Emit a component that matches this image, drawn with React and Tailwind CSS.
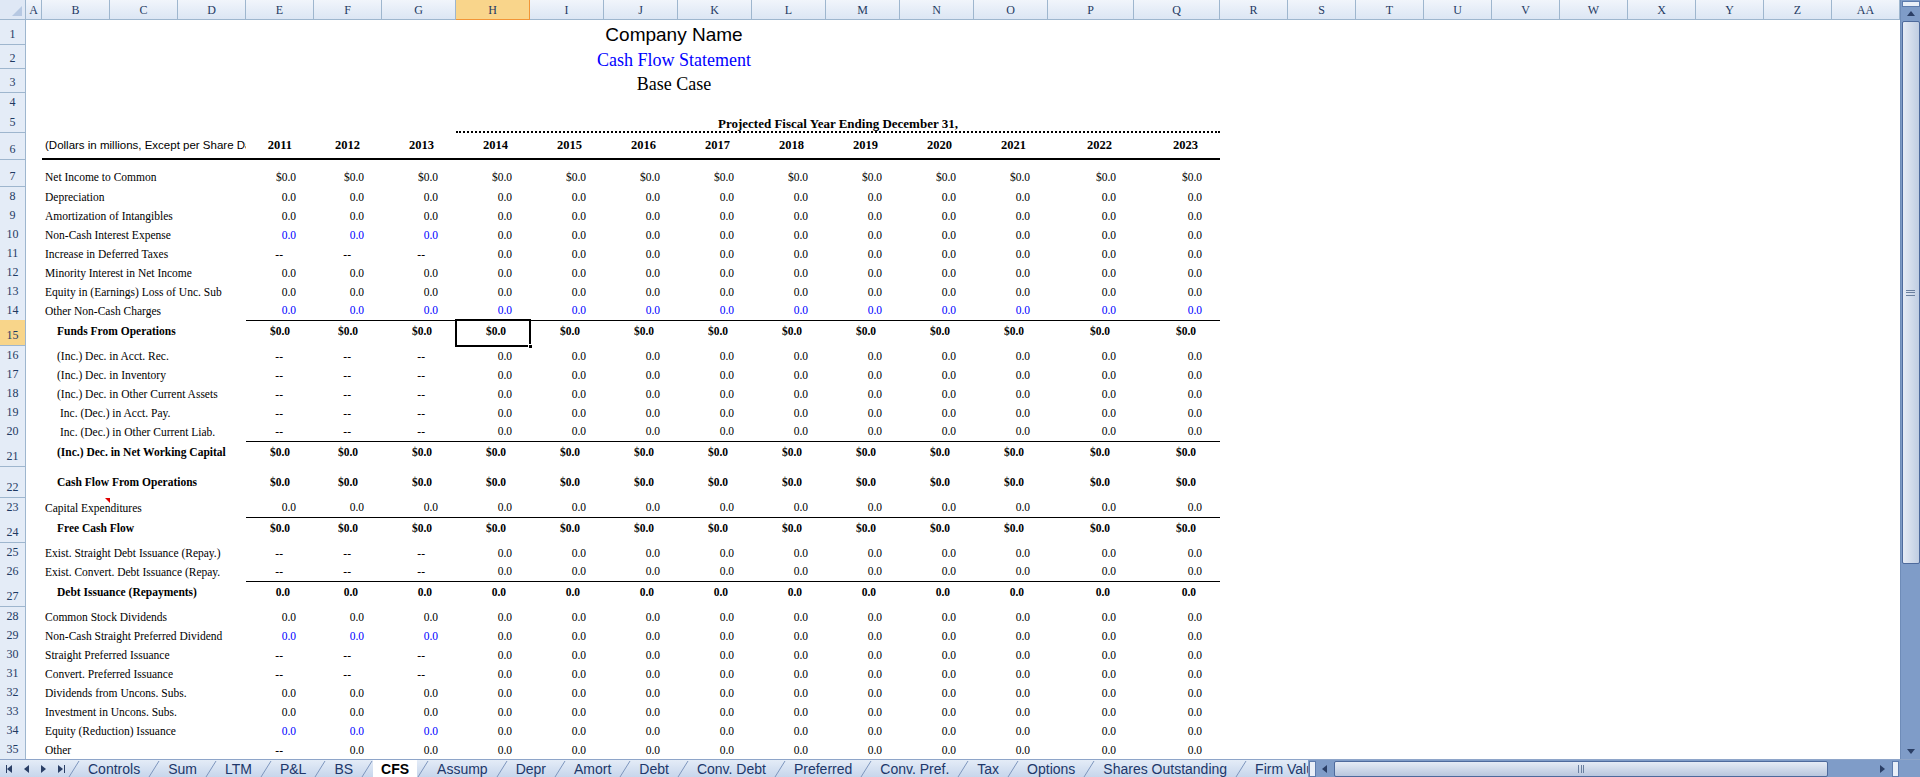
import React from "react";

const COLS = "grid-cols-[26px_16px_68px_68px_68px_68px_68px_74px_74px_74px_74px_74px_74px_74px_74px_74px_86px_86px_68px_68px_68px_68px_68px_68px_68px_68px_68px_68px]";
const LETTERS = ["A","B","C","D","E","F","G","H","I","J","K","L","M","N","O","P","Q","R","S","T","U","V","W","X","Y","Z","AA"];
const serif = { fontFamily: '"Liberation Serif", "Times New Roman", serif' };
const sans = { fontFamily: '"Liberation Sans", Arial, sans-serif' };

const Z = Array(13).fill("0.0");
const D = Array(13).fill("$0.0");
const dashE = ["--","--","--",...Array(10).fill("0.0")];

const rows = [
  { n: 7, h: 27, label: "Net Income to Common", vals: D },
  { n: 8, h: 19, label: "Depreciation", vals: Z },
  { n: 9, h: 19, label: "Amortization of Intangibles", vals: Z },
  { n: 10, h: 19, label: "Non-Cash Interest Expense", vals: Z, blue: [0,1,2] },
  { n: 11, h: 19, label: "Increase in Deferred Taxes", vals: dashE },
  { n: 12, h: 19, label: "Minority Interest in Net Income", vals: Z },
  { n: 13, h: 19, label: "Equity in (Earnings) Loss of Unc. Sub", vals: Z },
  { n: 14, h: 19, label: "Other Non-Cash Charges", vals: Z, blue: [0,1,2,3,4,5,6,7,8,9,10,11,12], line: true },
  { n: 15, h: 26, label: "Funds From Operations", vals: D, bold: true, indent: 12, top: true },
  { n: 16, h: 19, label: "(Inc.) Dec. in Acct. Rec.", vals: dashE, indent: 12 },
  { n: 17, h: 19, label: "(Inc.) Dec. in Inventory", vals: dashE, indent: 12 },
  { n: 18, h: 19, label: "(Inc.) Dec. in Other Current Assets", vals: dashE, indent: 12 },
  { n: 19, h: 19, label: "Inc. (Dec.) in Acct. Pay.", vals: dashE, indent: 15 },
  { n: 20, h: 19, label: "Inc. (Dec.) in Other Current Liab.", vals: dashE, indent: 15, line: true },
  { n: 21, h: 26, label: "(Inc.) Dec. in Net Working Capital", vals: D, bold: true, indent: 12, top: true },
  { n: 22, h: 31, label: "Cash Flow From Operations", vals: D, bold: true, indent: 12, mid: true },
  { n: 23, h: 19, label: "Capital Expenditures", vals: Z, line: true, comment: true },
  { n: 24, h: 26, label: "Free Cash Flow", vals: D, bold: true, indent: 12, top: true },
  { n: 25, h: 19, label: "Exist. Straight Debt Issuance (Repay.)", vals: dashE },
  { n: 26, h: 19, label: "Exist. Convert. Debt Issuance (Repay.", vals: dashE, line: true },
  { n: 27, h: 26, label: "Debt Issuance (Repayments)", vals: Z, bold: true, indent: 12, top: true },
  { n: 28, h: 19, label: "Common Stock Dividends", vals: Z },
  { n: 29, h: 19, label: "Non-Cash Straight Preferred Dividend", vals: Z, blue: [0,1,2] },
  { n: 30, h: 19, label: "Straight Preferred Issuance", vals: dashE },
  { n: 31, h: 19, label: "Convert. Preferred Issuance", vals: dashE },
  { n: 32, h: 19, label: "Dividends from Uncons. Subs.", vals: Z },
  { n: 33, h: 19, label: "Investment in Uncons. Subs.", vals: Z },
  { n: 34, h: 19, label: "Equity (Reduction) Issuance", vals: Z, blue: [0,1,2] },
  { n: 35, h: 19, label: "Other", vals: ["--", ...Array(12).fill("0.0")] },
];

function RowNum({ n, sel }) {
  return (
    <div className={`flex items-end justify-center pb-[1px] border-r border-b border-[#9eb6ce] text-[12px] text-[#1f3a63] ${sel ? "bg-[#f8d58a]" : "bg-[#e4ecf7]"}`} style={serif}>
      {n}
    </div>
  );
}

function DataRow({ r }) {
  const align = r.top ? "items-start pt-[3px]" : r.mid ? "items-center" : "items-end pb-[1px]";
  return (
    <div className={`grid ${COLS} shrink-0`} style={{ height: r.h }}>
      <RowNum n={r.n} sel={r.n === 15} />
      <div />
      <div className={`col-span-3 relative flex ${align} text-[11.5px] text-black whitespace-nowrap overflow-hidden ${r.bold ? "font-bold" : ""}`} style={{ ...serif, paddingLeft: 3 + (r.indent || 0) }}>
        {r.label}
        {r.comment && <div className="absolute left-[63px] top-0 w-0 h-0 border-l-[5px] border-l-transparent border-t-[5px] border-t-[#e00000]" />}
      </div>
      {r.vals.map((v, i) => {
        const isDash = v === "--";
        const blue = r.blue && r.blue.includes(i);
        const pr = isDash ? "pr-[31px]" : r.bold ? "pr-[24px]" : "pr-[18px]";
        const sel = r.n === 15 && i === 3;
        return (
          <div key={i} className={`relative flex justify-end ${align} ${pr} text-[11.5px] ${r.bold ? "font-bold" : ""} ${blue ? "text-[#0000ff]" : "text-black"} ${r.line ? "border-b border-black" : ""}`} style={serif}>
            {v}
            {sel && (
              <>
                <div className="absolute -left-[1px] -top-[1px] -right-[1px] -bottom-[1px] border-[2px] border-black" />
                <div className="absolute -right-[3px] -bottom-[3px] w-[5px] h-[5px] bg-black border border-white" />
              </>
            )}
          </div>
        );
      })}
      {Array(10).fill(0).map((_, i) => <div key={"e" + i} />)}
    </div>
  );
}

function Blank({ n, h, children }) {
  return (
    <div className={`grid ${COLS} shrink-0`} style={{ height: h }}>
      <RowNum n={n} />
      {children}
    </div>
  );
}

const tabs = ["Controls","Sum","LTM","P&L","BS","CFS","Assump","Depr","Amort","Debt","Conv. Debt","Preferred","Conv. Pref.","Tax","Options","Shares Outstanding","Firm Value","Pi"];

function Slant() {
  return (
    <svg width="12" height="18" viewBox="0 0 12 18" className="shrink-0">
      <line x1="1" y1="17" x2="11" y2="1" stroke="#7d95bd" strokeWidth="1" />
    </svg>
  );
}

function Tri({ dir, bar }) {
  const pts = dir === "l" ? "6,0 6,8 1,4" : dir === "r" ? "1,0 1,8 6,4" : dir === "u" ? "0,6 8,6 4,1" : "0,1 8,1 4,6";
  return (
    <svg width="8" height="8" viewBox="0 0 8 8" className="shrink-0">
      <polygon points={pts} fill="#2b3f66" />
      {bar === "l" && <rect x="0" y="0" width="1" height="8" fill="#2b3f66" />}
      {bar === "r" && <rect x="7" y="0" width="1" height="8" fill="#2b3f66" />}
    </svg>
  );
}

export default function App() {
  return (
    <div className="w-[1920px] h-[777px] bg-white flex flex-col overflow-hidden">
      <div className="flex flex-1 min-h-0">
        <div className="w-[1900px] flex flex-col overflow-hidden">
          <div className={`grid ${COLS} h-[20px] shrink-0`}>
            <div className="bg-[#dfe8f5] border-r border-b border-[#9eb6ce] relative">
              <div className="absolute right-[3px] bottom-[3px] w-0 h-0 border-l-[10px] border-l-transparent border-b-[10px] border-b-[#b6c8e2]" />
            </div>
            {LETTERS.map(l => (
              <div key={l} className={`flex items-center justify-center border-r border-b text-[12px] text-[#1f3a63] ${l === "H" ? "bg-[#f9d58b] border-[#f29536]" : "bg-gradient-to-b from-[#f1f5fb] to-[#dce6f4] border-[#9eb6ce]"}`} style={serif}>{l}</div>
            ))}
          </div>
          <Blank n={1} h={25}>
            <div className="col-[2/-1] flex items-end pb-[1px] pl-[545px]">
              <span className="w-[206px] text-center text-[19px] leading-none whitespace-nowrap" style={sans}>Company Name</span>
            </div>
          </Blank>
          <Blank n={2} h={24}>
            <div className="col-[2/-1] flex items-end pl-[545px]">
              <span className="w-[206px] text-center text-[18px] leading-none text-[#0000ff] whitespace-nowrap" style={serif}>Cash Flow Statement</span>
            </div>
          </Blank>
          <Blank n={3} h={24}>
            <div className="col-[2/-1] flex items-end pl-[545px]">
              <span className="w-[206px] text-center text-[18px] leading-none whitespace-nowrap" style={serif}>Base Case</span>
            </div>
          </Blank>
          <Blank n={4} h={19} />
          <Blank n={5} h={21}>
            <div className="col-start-9 col-span-10 flex items-end justify-center border-b-2 border-dotted border-black text-[13px] font-bold leading-none pb-[1px]" style={serif}>
              Projected Fiscal Year Ending December 31,
            </div>
          </Blank>
          <div className={`grid ${COLS} shrink-0`} style={{ height: 27 }}>
            <RowNum n={6} />
            <div />
            <div className="col-span-3 flex items-end pb-[4px] pl-[3px] text-[11.5px] whitespace-nowrap overflow-hidden border-b-2 border-black" style={sans}>(Dollars in millions, Except per Share Data)</div>
            {["2011","2012","2013","2014","2015","2016","2017","2018","2019","2020","2021","2022","2023"].map(y => (
              <div key={y} className="flex items-end justify-end pr-[22px] pb-[3px] text-[12.5px] font-bold border-b-2 border-black" style={serif}>{y}</div>
            ))}
          </div>
          {rows.map(r => <DataRow key={r.n} r={r} />)}
        </div>
        <div className="w-[20px] bg-[#7f9cc8] flex flex-col items-center border-l border-[#6f8cb8]">
          <div className="w-[18px] h-[6px] mt-[1px] bg-[#e9eff8] border border-[#5d7bad]" />
          <div className="h-[14px] flex items-center justify-center"><Tri dir="u" /></div>
          <div className="w-[18px] h-[543px] bg-gradient-to-r from-[#e5ebf5] to-[#c0cde2] border border-[#4e6a9c] rounded-[2px] flex items-center justify-center">
            <div className="w-[9px] h-[6px] border-t border-b border-[#6a7f9f] flex flex-col justify-center"><div className="h-px bg-[#6a7f9f]" /></div>
          </div>
          <div className="flex-1" />
          <div className="h-[14px] flex items-center justify-center"><Tri dir="d" /></div>
        </div>
      </div>
      <div className="h-[18px] shrink-0 flex bg-[#7f9cc8]">
        <div className="w-[1308px] flex items-stretch bg-gradient-to-b from-[#e4ecf7] to-[#c7d6ec] border-t border-[#8ea5c9] overflow-hidden">
          <div className="w-[68px] shrink-0 flex items-center gap-[9px] pl-[6px]">
            <Tri dir="l" bar="l" /><Tri dir="l" /><Tri dir="r" /><Tri dir="r" bar="r" />
          </div>
          {tabs.map(t => (
            <div key={t} className="flex items-stretch shrink-0">
              <Slant />
              <div className={`flex items-center px-[8px] text-[14px] leading-none ${t === "CFS" ? "bg-white font-bold text-black" : "text-[#20376a]"}`} style={sans}>{t}</div>
            </div>
          ))}
        </div>
        <div className="flex-1 flex items-center bg-[#7f9cc8] border-t border-[#8ea5c9]">
          <div className="w-[7px] h-[16px] bg-[#e9eff8] border border-[#5d7bad] ml-[1px]" />
          <div className="w-[18px] flex justify-center"><Tri dir="l" /></div>
          <div className="w-[494px] h-[16px] bg-gradient-to-b from-[#e5ebf5] to-[#b9c7de] border border-[#4e6a9c] rounded-[2px] flex items-center justify-center">
            <div className="w-[6px] h-[8px] border-l border-r border-[#6a7f9f] flex justify-center"><div className="w-px bg-[#6a7f9f]" /></div>
          </div>
          <div className="flex-1" />
          <div className="w-[18px] flex justify-center"><Tri dir="r" /></div>
          <div className="w-[7px] h-[16px] bg-[#e9eff8] border border-[#5d7bad] mr-[1px]" />
          <div className="w-[20px]" />
        </div>
      </div>
    </div>
  );
}
